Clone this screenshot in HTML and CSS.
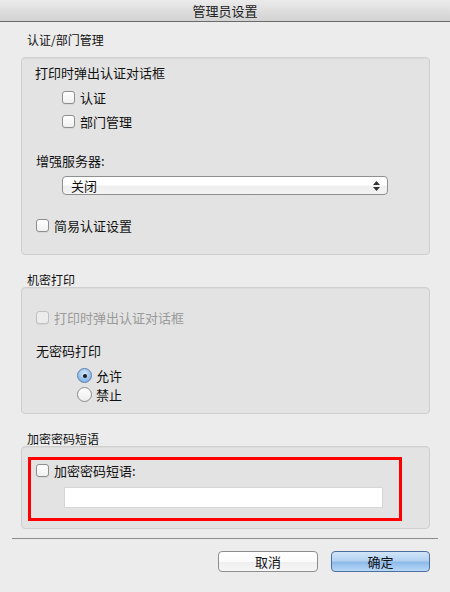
FILE: index.html
```html
<!DOCTYPE html>
<html lang="zh-CN">
<head>
<meta charset="utf-8">
<title>管理员设置</title>
<link rel="stylesheet" href="styles.css">
</head>
<body>
<div class="dialog">
  <div class="titlebar">管理员设置</div>
  <div class="content">
    <div class="group-label first">认证/部门管理</div>
    <div class="group box1">
      <div class="heading">打印时弹出认证对话框</div>
      <div class="row indent r1"><span class="cb"></span><span>认证</span></div>
      <div class="row indent r2"><span class="cb"></span><span>部门管理</span></div>
      <div class="heading h2">增强服务器:</div>
      <div class="select"><span>关闭</span><svg class="arrows" width="7" height="10" viewBox="0 0 7 10"><path d="M3.5 0 L7 4 L0 4 Z" fill="#333"/><path d="M0 6 L7 6 L3.5 10 Z" fill="#333"/></svg></div>
      <div class="row r3"><span class="cb"></span><span>简易认证设置</span></div>
    </div>

    <div class="group-label">机密打印</div>
    <div class="group box2">
      <div class="row disabled"><span class="cb cb-dis"></span><span>打印时弹出认证对话框</span></div>
      <div class="heading h3">无密码打印</div>
      <div class="row radio-row rr1"><span class="radio on"></span><span>允许</span></div>
      <div class="row radio-row rr2"><span class="radio"></span><span>禁止</span></div>
    </div>

    <div class="group-label">加密密码短语</div>
    <div class="group box3">
      <div class="highlight">
        <div class="row"><span class="cb"></span><span>加密密码短语:</span></div>
        <div class="field"></div>
      </div>
    </div>

    <div class="separator"></div>
    <div class="buttons">
      <button class="btn">取消</button>
      <button class="btn primary">确定</button>
    </div>
  </div>
</div>
</body>
</html>
```
FILE: styles.css
```css
* { box-sizing: border-box; }
html, body { margin: 0; padding: 0; }
body {
  width: 450px;
  height: 592px;
  background: #ececec;
  font-family: "Noto Sans CJK SC", "Noto Sans", sans-serif;
  font-size: 13px;
  color: #111;
  overflow: hidden;
}
.dialog { width: 450px; height: 592px; }
.titlebar {
  height: 22px;
  line-height: 21px;
  text-align: center;
  font-size: 13px;
  color: #222;
  background: linear-gradient(#ebebeb, #d2d2d2);
  border-bottom: 1px solid #6a6a6a;
}
.content { padding: 0 20px 0 21px; }
.group-label {
  font-size: 12px;
  line-height: 14px;
  height: 14px;
  margin: 18px 0 0 6px;
}
.group-label.first { margin-top: 11px; margin-bottom: 10px; }
.group {
  background: #e3e3e3;
  border: 1px solid #cfcfcf;
  border-radius: 4px;
  box-shadow: inset 0 1px 1px rgba(0,0,0,0.04);
}
.box1 { height: 198px; padding: 6px 0 0 13px; }
.box2 { height: 127px; padding: 21px 0 0 14px; }
.box3 { height: 83px; padding: 10px 0 0 6px; }

.heading { line-height: 17px; height: 17px; }
.h2 { margin-top: 22px; margin-left: 1px; }
.h3 { margin-top: 16px; }
.row {
  display: flex;
  align-items: center;
  height: 17px;
  gap: 5px;
}
.indent { margin-left: 27px; }
.r1 { margin-top: 8px; }
.r2 { margin-top: 7px; }
.r3 { margin-top: 22px; margin-left: 1px; }
.cb {
  width: 13px;
  height: 13px;
  border: 1px solid #8e8e8e;
  border-radius: 3px;
  background: linear-gradient(#ffffff, #f0f0f0);
  box-shadow: 0 1px 0 rgba(0,0,0,0.05);
  flex: none;
}
.cb-dis { border-color: #c0c0c0; background: #ececec; }
.disabled { color: #9a9a9a; }
.radio-row { margin-left: 41px; gap: 4px; }
.rr1 { margin-top: 8px; }
.rr2 { margin-top: 2px; }
.radio {
  width: 15px;
  height: 15px;
  border-radius: 50%;
  border: 1px solid #8a8a8a;
  background: linear-gradient(#ffffff, #ededed);
  flex: none;
  position: relative;
}
.radio.on {
  border-color: #5b7fae;
  background: radial-gradient(circle at 50% 35%, #d6e8fb, #8ab8e9 70%);
}
.radio.on::after {
  content: "";
  position: absolute;
  left: 4.5px;
  top: 4.5px;
  width: 4px;
  height: 4px;
  border-radius: 50%;
  background: #1a1a1a;
}
.select {
  margin: 7px 0 0 27px;
  width: 326px;
  height: 19px;
  border: 1px solid #8f8f8f;
  border-radius: 4px;
  background: linear-gradient(#ffffff 0%, #ffffff 45%, #efefef 55%, #f3f3f3 100%);
  display: flex;
  align-items: center;
  justify-content: space-between;
  padding: 0 7px 0 8px;
  line-height: 17px;
}
.arrows { flex: none; }
.highlight {
  width: 374px;
  height: 64px;
  border: 3px solid #ff0000;
  padding: 2px 0 0 5px;
}
.field {
  margin: 8px 0 0 28px;
  width: 319px;
  height: 21px;
  background: #ffffff;
  border: 1px solid #d6d6d6;
}
.separator {
  margin: 9px 0 0 -9px;
  width: 426px;
  height: 1px;
  background: #8c8c8c;
}
.buttons {
  display: flex;
  justify-content: flex-end;
  gap: 13px;
  margin-top: 12px;
}
.btn {
  font-family: "Noto Sans CJK SC", "Noto Sans", sans-serif;
  font-size: 13px;
  color: #111;
  width: 100px;
  height: 21px;
  padding: 0;
  line-height: 19px;
  border: 1px solid #8e8e8e;
  border-radius: 4px;
  background: linear-gradient(#ffffff 0%, #fbfbfb 50%, #efefef 55%, #f6f6f6 100%);
}
.btn.primary {
  width: 99px;
  border-color: #4f6f9c;
  background: linear-gradient(#d2e5f8 0%, #b3d2f2 45%, #8ebaea 55%, #b8d8f7 100%);
}
```
